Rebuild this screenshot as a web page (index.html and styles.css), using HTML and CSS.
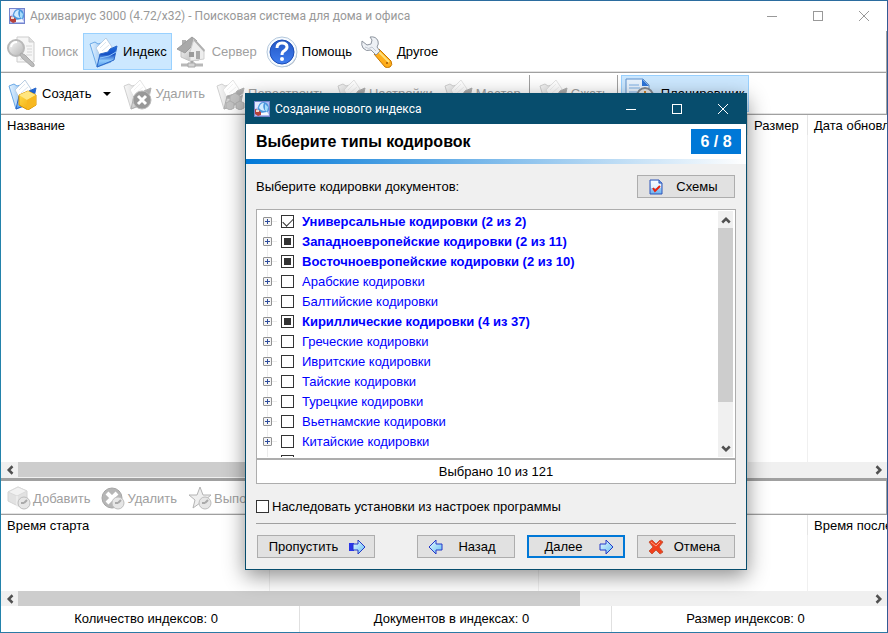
FILE: index.html
```html
<!DOCTYPE html>
<html lang="ru">
<head>
  <meta charset="UTF-8">
  <meta name="viewport" content="width=device-width, initial-scale=1.0">
  <title>Архивариус 3000</title>
  <link rel="stylesheet" href="styles.css">
</head>
<body>
  <!-- Icons -->
  <svg class="sprite" aria-hidden="true">
    <defs>
      <linearGradient id="g-blue" x1="0" y1="0" x2="0" y2="1">
        <stop offset="0" stop-color="#dff0ff"/><stop offset="1" stop-color="#6cb2f0"/>
      </linearGradient>
      <linearGradient id="g-folder" x1="0" y1="0" x2="0" y2="1">
        <stop offset="0" stop-color="#1f6fe0"/><stop offset=".4" stop-color="#1650c4"/><stop offset=".7" stop-color="#8fcbfc"/><stop offset="1" stop-color="#4a95ea"/>
      </linearGradient>
      <linearGradient id="g-back" x1="0" y1="0" x2="1" y2="0">
        <stop offset="0" stop-color="#e6f4ff"/><stop offset="1" stop-color="#5fa4ec"/>
      </linearGradient>
      <linearGradient id="g-box" x1="0" y1="0" x2="1" y2="1">
        <stop offset="0" stop-color="#ffe050"/><stop offset="1" stop-color="#f0a000"/>
      </linearGradient>
      <linearGradient id="g-arrow" x1="0" y1="0" x2="1" y2="1">
        <stop offset="0" stop-color="#eafaff"/><stop offset="1" stop-color="#63bdf2"/>
      </linearGradient>
      <linearGradient id="g-gray" x1="0" y1="0" x2="1" y2="1">
        <stop offset="0" stop-color="#fafafa"/><stop offset="1" stop-color="#b4b4b4"/>
      </linearGradient>
      <linearGradient id="g-help" x1="0" y1="0" x2="0" y2="1">
        <stop offset="0" stop-color="#2457c4"/><stop offset="1" stop-color="#3f7df0"/>
      </linearGradient>
    </defs>

    <symbol id="i-app" viewBox="0 0 16 16">
      <rect width="16" height="16" fill="#7484cc"/>
      <path d="M1 1h14v14H1z" fill="#aebcf0"/>
      <path d="M1 1h6L4 6 1 8z" fill="#e4e8ff"/>
      <path d="M4 8Q4 1 10 1Q15 2 15 8Q15 12 9 12Q5 11 4 8z" fill="#4a97de"/>
      <path d="M5 7Q6 2 10 2Q8 6 11 10Q7 10 5 7z" fill="#cfeaff"/>
      <path d="M11 3l3 3-1 5-2-2z" fill="#a5dcfa"/>
      <path d="M1 8l3 1 3 2v3l-3 1-3-2z" fill="#b5413c"/>
      <path d="M2 9h3v2H2z" fill="#f3d9d0"/>
      <path d="M7 12l6-1 2 3H7z" fill="#f4f8ff"/>
    </symbol>

    <symbol id="i-search" viewBox="0 0 32 32">
      <path d="M11 1h12l5 5v20H11z" fill="#f6f6f6" stroke="#cdcdcd"/>
      <path d="M23 1v5h5" fill="#ddd" stroke="#cdcdcd"/>
      <path d="M20 10h6M21 13h5M21 16h5M20 19h6M14 23h8" stroke="#d6d6d6"/>
      <circle cx="10" cy="12" r="8" fill="url(#g-gray)" stroke="#b9b9b9" stroke-width="2"/>
      <path d="M5 11q1-5 6-5" fill="none" stroke="#fff" stroke-width="2"/>
      <path d="M15 17l4 2 9 9q1 4-3 2l-9-8-2-3z" fill="#bdbdbd" stroke="#aaa"/>
    </symbol>

    <symbol id="i-folder" viewBox="0 0 32 32">
      <path d="M3 8l5-2 3 2 7-2 6 20-14 5z" fill="url(#g-back)" stroke="#6aa8e6"/>
      <path d="M9 12l10-10 6 9-10 12z" fill="#fff" stroke="#b9cde2"/>
      <path d="M13 12l6-6M15 15l7-6" stroke="#dbe6f0"/>
      <path d="M10 31l3-13 8-2 2-3 7-3-3 14z" fill="url(#g-folder)" stroke="#2a66c8"/>
      <path d="M13 22l9-2 7-4" fill="none" stroke="#8fc6fb"/>
    </symbol>

    <symbol id="i-home" viewBox="0 0 32 32">
      <path d="M6 4h4v7H6z" fill="#b0b0b0"/>
      <path d="M5 15L15 5l8 9v10l-9 1-9-4z" fill="url(#g-gray)" stroke="#c2c2c2"/>
      <path d="M1 13L16 1l5 4L9 17z" fill="#a9a9a9" stroke="#9d9d9d"/>
      <path d="M18 3l10 11v9l-14 2v-9z" fill="#ededed" stroke="#cfcfcf"/>
      <path d="M18 2l11 12-1 2L18 5z" fill="#b0b0b0"/>
      <path d="M13 16h5v5h-5z" fill="#9a9a9a"/>
      <path d="M20 15h4v8h-4z" fill="#a8a8a8"/>
      <path d="M16 25v4" stroke="#a9a9a9" stroke-width="3"/>
      <path d="M5 29h22" stroke="#b8b8b8" stroke-width="3"/>
      <path d="M12 27h7v4h-7z" fill="#d4d4d4" stroke="#a8a8a8"/>
    </symbol>

    <symbol id="i-help" viewBox="0 0 32 32">
      <circle cx="17" cy="17" r="14" fill="#7d8694"/>
      <circle cx="16" cy="16" r="15" fill="#f7fbff" stroke="#b4c8dc"/>
      <circle cx="16" cy="16" r="12" fill="url(#g-help)" stroke="#1b4bb4"/>
      <path d="M11 12q0-5 5-5t5 4q0 2-3 4-2 1-2 4" fill="none" stroke="#fff" stroke-width="3"/>
      <circle cx="16" cy="23" r="2" fill="#fff"/>
    </symbol>

    <symbol id="i-tools" viewBox="0 0 32 32">
      <path d="M13 18l5-5 12 12q2 4-1 6-3 1-5 0z" fill="#ffae1c" stroke="#c77800"/>
      <path d="M18 16l10 10" stroke="#ffe07a" stroke-width="2"/>
      <circle cx="26" cy="27" r="1" fill="#a65a00"/>
      <path d="M9 1q6-1 8 4 1 3-1 6l3 4-4 4-5-5q-5 2-8-2-2-3-1-7l5 4 4-1 1-4z" fill="#eef1f5" stroke="#8d949e"/>
      <path d="M4 11q4 3 7 0l4 4" fill="none" stroke="#c2c8d2"/>
    </symbol>

    <symbol id="i-create" viewBox="0 0 32 32">
      <use href="#i-folder"/>
      <path d="M13 17l9-4 8 4v10l-8 5-9-5z" fill="url(#g-box)" stroke="#d99400"/>
      <path d="M13 17l8 5 9-5-8-4z" fill="#ffe680"/>
      <path d="M21 22l9-5v10l-9 5z" fill="#f7b820"/>
    </symbol>

    <symbol id="i-delete" viewBox="0 0 32 32">
      <use href="#i-folder"/>
      <circle cx="21" cy="22" r="9" fill="#333" stroke="#777"/>
      <path d="M17 18l8 8M25 18l-8 8" stroke="#fff" stroke-width="3"/>
    </symbol>

    <symbol id="i-rebuild" viewBox="0 0 32 32">
      <use href="#i-folder"/>
      <path d="M16 18l5-3 5 3v5l-5 3-5-3z" fill="#8a8a8a" stroke="#666"/>
      <path d="M12 25l4-2 4 2v5l-4 2-4-2zM22 25l4-2 4 2v5l-4 2-4-2z" fill="#8a8a8a" stroke="#666"/>
    </symbol>

    <symbol id="i-plan" viewBox="0 0 32 32">
      <path d="M1 1h17l6 6v24H1z" fill="#e9f4ff" stroke="#5f91cc"/>
      <path d="M17 1l7 7h-7z" fill="#2d74d8"/>
      <path d="M4 7h10M4 10h11M4 14h8M4 18h7M4 22h6" stroke="#7cb0e6"/>
      <circle cx="20" cy="18" r="8" fill="#e4e6e8" stroke="#85898e" stroke-width="2"/>
      <path d="M20 13v5l4 2" fill="none" stroke="#c9822d" stroke-width="2"/>
    </symbol>

    <symbol id="i-clock" viewBox="0 0 24 24">
      <circle cx="17" cy="17" r="6" fill="#e6e6e6" stroke="#bdbdbd"/>
      <path d="M17 17l3-3M17 17h-3" stroke="#aaa" stroke-width="2"/>
    </symbol>
    <symbol id="i-add-task" viewBox="0 0 24 24">
      <path d="M1 6l10-5 9 4v13l-9 2-10-5z" fill="#e2e2e2" stroke="#d4d4d4"/>
      <path d="M1 6l9 4 10-5-9-4z" fill="#f2f2f2" stroke="#dadada"/>
      <path d="M10 10v13" stroke="#f6f6f6"/>
      <use href="#i-clock"/>
    </symbol>
    <symbol id="i-del-task" viewBox="0 0 24 24">
      <circle cx="11" cy="12" r="10" fill="#b6b6b6" stroke="#a6a6a6"/>
      <path d="M6 7l10 10M16 7L6 17" stroke="#fff" stroke-width="4"/>
      <use href="#i-clock"/>
    </symbol>
    <symbol id="i-run-task" viewBox="0 0 24 24">
      <path d="M12 1l3 8h8l-6 5 2 8-7-5-7 5 2-8-6-5h8z" fill="#efefef" stroke="#b4b4b4"/>
      <use href="#i-clock"/>
    </symbol>

    <symbol id="i-check-doc" viewBox="0 0 16 16">
      <path d="M2 1h9l3 3v11H2z" fill="url(#g-blue)" stroke="#2f55b8"/>
      <path d="M3 2h7v3h3v4H3z" fill="#fff" opacity=".7"/>
      <path d="M11 1v3h3" fill="#7da6e8" stroke="#2f55b8"/>
      <path d="M5 9l2 3 5-5" fill="none" stroke="#e8200c" stroke-width="2"/>
    </symbol>
    <symbol id="i-right" viewBox="0 0 16 16">
      <path d="M2 5h6V1l7 7-7 7v-4H2z" fill="url(#g-arrow)" stroke="#2438c8"/>
    </symbol>
    <symbol id="i-skip" viewBox="0 0 16 16">
      <path d="M0 4h5v8H0z" fill="#2a35e8"/>
      <path d="M4 5h5V1l7 7-7 7v-4H4z" fill="url(#g-arrow)" stroke="#2438c8"/>
    </symbol>
    <symbol id="i-left" viewBox="0 0 16 16">
      <path d="M14 5H8V1L1 8l7 7v-4h6z" fill="url(#g-arrow)" stroke="#2438c8"/>
    </symbol>
    <symbol id="i-cancel" viewBox="0 0 16 16">
      <path d="M1 3l3-2 4 4 4-4 3 2-4 5 4 5-3 2-4-4-4 4-3-3 4-4z" fill="#f0401c" stroke="#c8583c"/>
      <path d="M3 3l5 4 4-4" fill="none" stroke="#ffa080"/>
    </symbol>
    <symbol id="i-min" viewBox="0 0 12 12"><path d="M1 6h10v1H1z" fill="currentColor"/></symbol>
    <symbol id="i-max" viewBox="0 0 12 12"><path d="M1 1h10v10H1zM2 2v8h8V2z" fill="currentColor" fill-rule="evenodd"/></symbol>
    <symbol id="i-close" viewBox="0 0 12 12"><path d="M1 1l10 10M11 1L1 11" stroke="currentColor" fill="none"/></symbol>
    <symbol id="i-chev" viewBox="0 0 8 8"><path d="M1 6l3-3 3 3" stroke="currentColor" stroke-width="2" fill="none"/></symbol>
  </svg>

  <div class="window">
    <header class="titlebar">
      <svg class="icon16"><use href="#i-app"/></svg>
      <span class="caption">Архивариус 3000 (4.72/x32) - Поисковая система для дома и офиса</span>
      <button class="win-btn" aria-label="Свернуть"><svg><use href="#i-min"/></svg></button>
      <button class="win-btn" aria-label="Развернуть"><svg><use href="#i-max"/></svg></button>
      <button class="win-btn" aria-label="Закрыть"><svg><use href="#i-close"/></svg></button>
    </header>

    <nav class="toolbar">
      <button class="tool" disabled><svg><use href="#i-search"/></svg>Поиск</button>
      <button class="tool active"><svg><use href="#i-folder"/></svg>Индекс</button>
      <button class="tool" disabled><svg><use href="#i-home"/></svg>Сервер</button>
      <button class="tool"><svg><use href="#i-help"/></svg>Помощь</button>
      <button class="tool"><svg><use href="#i-tools"/></svg>Другое</button>
    </nav>

    <div class="toolbar">
      <button class="tool with-menu"><svg><use href="#i-create"/></svg>Создать<span class="caret"></span></button>
      <button class="tool faded" disabled><svg><use href="#i-delete"/></svg>Удалить</button>
      <button class="tool faded" disabled><svg><use href="#i-rebuild"/></svg>Перестроить</button>
      <button class="tool faded" disabled><svg><use href="#i-folder"/></svg>Настройки</button>
      <button class="tool faded" disabled><svg><use href="#i-folder"/></svg>Мастер</button>
      <span class="divider"></span>
      <button class="tool faded" disabled><svg><use href="#i-folder"/></svg>Сжать</button>
      <span class="divider"></span>
      <button class="tool active"><svg><use href="#i-plan"/></svg>Планировщик</button>
    </div>

    <div class="list list-indexes">
      <table>
        <thead>
          <tr><th class="col-name">Название</th><th class="col-size">Размер</th><th class="col-date">Дата обновления</th></tr>
        </thead>
        <tbody><tr><td></td><td></td><td></td></tr></tbody>
      </table>
    </div>
    <div class="hscroll">
      <button aria-label="Влево"><svg class="turn-left"><use href="#i-chev"/></svg></button>
      <div class="track"><div class="thumb"></div></div>
      <button aria-label="Вправо"><svg class="turn-right"><use href="#i-chev"/></svg></button>
    </div>
    <div class="splitter"></div>

    <div class="toolbar small">
      <button class="tool" disabled><svg><use href="#i-add-task"/></svg>Добавить</button>
      <button class="tool" disabled><svg><use href="#i-del-task"/></svg>Удалить</button>
      <button class="tool" disabled><svg><use href="#i-run-task"/></svg>Выполнить</button>
    </div>

    <div class="list list-tasks">
      <table>
        <thead>
          <tr><th>Время старта</th><th></th><th></th><th>Время последнего</th><th></th></tr>
        </thead>
        <tbody><tr><td></td><td></td><td></td><td></td><td></td></tr></tbody>
      </table>
    </div>
    <div class="hscroll">
      <button aria-label="Влево"><svg class="turn-left"><use href="#i-chev"/></svg></button>
      <div class="track"><div class="thumb"></div></div>
      <button aria-label="Вправо"><svg class="turn-right"><use href="#i-chev"/></svg></button>
    </div>

    <footer class="statusbar">
      <span>Количество индексов: 0</span>
      <span>Документов в индексах: 0</span>
      <span>Размер индексов: 0</span>
    </footer>
  </div>

  <!-- Index wizard -->
  <div class="dialog" role="dialog" aria-labelledby="dialog-caption">
    <header class="titlebar">
      <svg class="icon16"><use href="#i-app"/></svg>
      <span class="caption" id="dialog-caption">Создание нового индекса</span>
      <button class="win-btn" aria-label="Свернуть"><svg><use href="#i-min"/></svg></button>
      <button class="win-btn" aria-label="Развернуть"><svg><use href="#i-max"/></svg></button>
      <button class="win-btn" aria-label="Закрыть"><svg><use href="#i-close"/></svg></button>
    </header>

    <div class="step-header">
      <h1>Выберите типы кодировок</h1>
      <span class="step">6 / 8</span>
    </div>
    <div class="step-line"></div>

    <div class="dialog-body">
      <div class="row-head">
        <span>Выберите кодировки документов:</span>
        <button class="btn"><svg><use href="#i-check-doc"/></svg><span>Схемы</span></button>
      </div>

      <div class="tree-box">
        <ul class="tree">
          <li class="bold"><button class="expand" aria-label="Раскрыть"></button><label><input type="checkbox" checked>Универсальные кодировки (2 из 2)</label></li>
          <li class="bold"><button class="expand" aria-label="Раскрыть"></button><label><input type="checkbox" class="partial">Западноевропейские кодировки (2 из 11)</label></li>
          <li class="bold"><button class="expand" aria-label="Раскрыть"></button><label><input type="checkbox" class="partial">Восточноевропейские кодировки (2 из 10)</label></li>
          <li><button class="expand" aria-label="Раскрыть"></button><label><input type="checkbox">Арабские кодировки</label></li>
          <li><button class="expand" aria-label="Раскрыть"></button><label><input type="checkbox">Балтийские кодировки</label></li>
          <li class="bold"><button class="expand" aria-label="Раскрыть"></button><label><input type="checkbox" class="partial">Кириллические кодировки (4 из 37)</label></li>
          <li><button class="expand" aria-label="Раскрыть"></button><label><input type="checkbox">Греческие кодировки</label></li>
          <li><button class="expand" aria-label="Раскрыть"></button><label><input type="checkbox">Ивритские кодировки</label></li>
          <li><button class="expand" aria-label="Раскрыть"></button><label><input type="checkbox">Тайские кодировки</label></li>
          <li><button class="expand" aria-label="Раскрыть"></button><label><input type="checkbox">Турецкие кодировки</label></li>
          <li><button class="expand" aria-label="Раскрыть"></button><label><input type="checkbox">Вьетнамские кодировки</label></li>
          <li><button class="expand" aria-label="Раскрыть"></button><label><input type="checkbox">Китайские кодировки</label></li>
          <li><button class="expand" aria-label="Раскрыть"></button><label><input type="checkbox">Японские кодировки</label></li>
        </ul>
        <div class="vscroll">
          <button aria-label="Вверх"><svg><use href="#i-chev"/></svg></button>
          <div class="track"><div class="thumb"></div></div>
          <button aria-label="Вниз"><svg class="turn-down"><use href="#i-chev"/></svg></button>
        </div>
      </div>
      <div class="selected-count">Выбрано 10 из 121</div>

      <label class="inherit"><input type="checkbox">Наследовать установки из настроек программы</label>

      <div class="dialog-buttons">
        <button class="btn btn-wide icon-right"><span>Пропустить</span><svg><use href="#i-skip"/></svg></button>
        <button class="btn"><svg><use href="#i-left"/></svg><span>Назад</span></button>
        <button class="btn btn-default icon-right"><span>Далее</span><svg><use href="#i-right"/></svg></button>
        <button class="btn"><svg><use href="#i-cancel"/></svg><span>Отмена</span></button>
      </div>
    </div>
  </div>

  <script>
    document.querySelectorAll('.partial').forEach(function (box) {
      box.indeterminate = true;
    });
  </script>
</body>
</html>
```

FILE: styles.css
```css
* {
  box-sizing: border-box;
}
body {
  margin: 0;
  font-family: "Liberation Sans", Arial, sans-serif;
  font-size: 13px;
  color: #000;
  overflow: hidden;
}
button {
  font: inherit;
  color: inherit;
  border: none;
  background: none;
  padding: 0;
}
svg {
  display: block;
  flex: none;
}
.sprite {
  position: absolute;
  width: 0;
  height: 0;
}

/* main window */
.window {
  display: flex;
  flex-direction: column;
  height: 100vh;
  background: #fff;
  border: 1px solid;
  border-color: #2b6c9f #345a94 #2b7aa5 #2382ab;
}
.titlebar {
  display: flex;
  align-items: center;
  height: 30px;
  padding-left: 8px;
  font-family: Roboto, "Noto Sans", sans-serif;
  font-size: 12px;
  color: #999;
}
.icon16 {
  width: 16px;
  height: 16px;
}
.caption {
  flex: 1;
  padding-left: 5px;
}
.win-btn {
  display: flex;
  align-items: center;
  justify-content: center;
  width: 46px;
  height: 28px;
}
.win-btn svg {
  width: 12px;
  height: 12px;
}

/* toolbars */
.toolbar {
  display: flex;
  flex: none;
  height: 42px;
  padding: 2px 1px 1px;
  border-bottom: 1px solid #a0a0a0;
  border-right: 1px solid #a0a0a0;
  box-shadow: inset 0 -1px #e3e3e3;
}
.tool {
  display: flex;
  align-items: center;
  gap: 4px;
  height: 37px;
  padding: 0 4px 0 3px;
  border: 1px solid transparent;
  white-space: nowrap;
}
.tool svg {
  width: 32px;
  height: 32px;
}
.tool:disabled {
  color: #a0a0a0;
}
.tool.active {
  background: #cce8ff;
  border-color: #99d1ff;
}
.tool.faded {
  gap: 2px;
}
.tool.faded svg {
  filter: grayscale(1);
  opacity: 0.5;
}
.tool.with-menu {
  padding-right: 5px;
}
.caret {
  margin-left: 8px;
  border: 4px solid transparent;
  border-top-color: #000;
  border-bottom: none;
}
.divider {
  width: 1px;
  margin: 0 3px;
  background: #a0a0a0;
}
.toolbar.small {
  height: 34px;
  padding-left: 2px;
  gap: 2px;
}
.small .tool {
  height: 30px;
  gap: 2px;
}
.small svg {
  width: 24px;
  height: 24px;
}

/* lists */
.list {
  overflow: hidden;
}
.list-indexes {
  flex: 1;
}
.list-tasks {
  flex: none;
  height: 76px;
}
.list table {
  width: 1345px;
  height: 100%;
  table-layout: fixed;
  border-collapse: separate;
  border-spacing: 0;
}
.list th {
  height: 20px;
  padding: 0 6px;
  text-align: left;
  font-weight: normal;
  border-right: 1px solid #e5e5e5;
}
.list td {
  padding: 0;
  border-right: 1px solid #f0f0f0;
}
.col-name {
  width: 747px;
}
.col-size {
  width: 60px;
}

/* scrollbars */
.hscroll,
.vscroll {
  display: flex;
  flex: none;
  background: #f0f0f0;
  color: #505050;
}
.hscroll {
  height: 15px;
}
.hscroll button {
  width: 17px;
}
.hscroll button,
.vscroll button {
  display: flex;
  align-items: center;
  justify-content: center;
}
.hscroll svg,
.vscroll svg {
  width: 10px;
  height: 10px;
}
.track {
  flex: 1;
}
.thumb {
  background: #cdcdcd;
}
.hscroll .thumb {
  width: 66%;
  height: 100%;
}
.turn-left {
  transform: rotate(-90deg);
}
.turn-right {
  transform: rotate(90deg);
}
.turn-down {
  transform: rotate(180deg);
}
.splitter {
  flex: none;
  height: 4px;
  background: #a0a0a0;
  border-top: 1px solid #f0f0f0;
}

.statusbar {
  display: grid;
  grid-template-columns: 298fr 312fr 276fr;
  flex: none;
  height: 26px;
  line-height: 26px;
  text-align: center;
}
.statusbar span {
  padding-right: 8px;
}
.statusbar span + span {
  border-left: 1px solid #e0e0e0;
}

/* wizard dialog */
.dialog {
  position: absolute;
  left: 245px;
  top: 93px;
  width: 502px;
  background: #f0f0f0;
  border: 1px solid #074d6d;
  box-shadow: 0 6px 20px rgba(0, 0, 0, 0.45);
}
.dialog .titlebar {
  background: #074d6d;
  color: #fff;
}
.step-header {
  display: flex;
  align-items: center;
  justify-content: space-between;
  height: 35px;
  padding: 0 5px 0 10px;
  background: #fff;
}
.step-header h1 {
  margin: 0;
  font-size: 16px;
}
.step {
  width: 50px;
  line-height: 25px;
  background: #0078d7;
  color: #fff;
  font-size: 16px;
  font-weight: bold;
  text-align: center;
}
.step-line {
  height: 5px;
  background: linear-gradient(to right, #0078d7, #fff);
}
.dialog-body {
  padding: 11px 10px;
}
.row-head {
  display: flex;
  align-items: center;
  justify-content: space-between;
  padding-right: 1px;
  margin-bottom: 11px;
}
.btn {
  display: flex;
  align-items: center;
  width: 98px;
  height: 23px;
  padding: 0 4px 0 10px;
  background: #e1e1e1;
  border: 1px solid #adadad;
}
.btn svg {
  width: 16px;
  height: 16px;
}
.btn span {
  flex: 1;
  text-align: center;
}
.btn.icon-right {
  padding: 0 9px 0 0;
}
.btn-wide {
  width: 118px;
  margin-right: auto;
}
.btn-default {
  border: 2px solid #0078d7;
}

.tree-box {
  display: flex;
  height: 251px;
  padding: 1px;
  background: #fff;
  border: 1px solid #adadad;
  border-bottom-width: 2px;
}
.tree {
  flex: 1;
  margin: 0;
  padding: 0 0 0 5px;
  list-style: none;
  overflow: hidden;
  background: linear-gradient(#ececec, #ececec) 9px 10px / 1px 100% no-repeat;
}
.tree li {
  display: flex;
  align-items: center;
  height: 20px;
  color: #0000ff;
}
.tree .bold {
  font-weight: bold;
}
.tree label {
  display: flex;
  align-items: center;
  gap: 8px;
}
.tree label::before {
  content: "";
  width: 5px;
  height: 1px;
  margin-right: -4px;
  background: #ececec;
}
.expand {
  width: 9px;
  height: 9px;
  border: 1px solid #919191;
  border-radius: 1px;
  background:
    linear-gradient(#2c4a9c, #2c4a9c) center / 5px 1px no-repeat,
    linear-gradient(#2c4a9c, #2c4a9c) center / 1px 5px no-repeat,
    #f4f4f4;
}
input[type="checkbox"] {
  appearance: none;
  flex: none;
  width: 13px;
  height: 13px;
  margin: 0;
  border: 1px solid #333;
  background: #fff;
}
input[type="checkbox"]:indeterminate {
  background: linear-gradient(#333, #333) center / 7px 7px no-repeat #fff;
}
input[type="checkbox"]:checked::before {
  content: "";
  display: block;
  width: 9px;
  height: 5px;
  margin: 2px 1px;
  border: solid #333;
  border-width: 0 0 1px 1px;
  transform: rotate(-45deg);
}
.vscroll {
  flex-direction: column;
  width: 15px;
  margin-right: 1px;
}
.vscroll button {
  height: 17px;
}
.vscroll .thumb {
  width: 100%;
  height: 82%;
}
.selected-count {
  height: 24px;
  line-height: 23px;
  text-align: center;
  background: #fff;
  border: 1px solid #adadad;
  border-top: none;
}
.inherit {
  display: flex;
  align-items: center;
  gap: 3px;
  height: 24px;
  margin: 10px 0 5px;
}
.dialog-buttons {
  display: flex;
  gap: 12px;
  padding: 11px 1px 0;
  border-top: 1px solid #a0a0a0;
}
```
